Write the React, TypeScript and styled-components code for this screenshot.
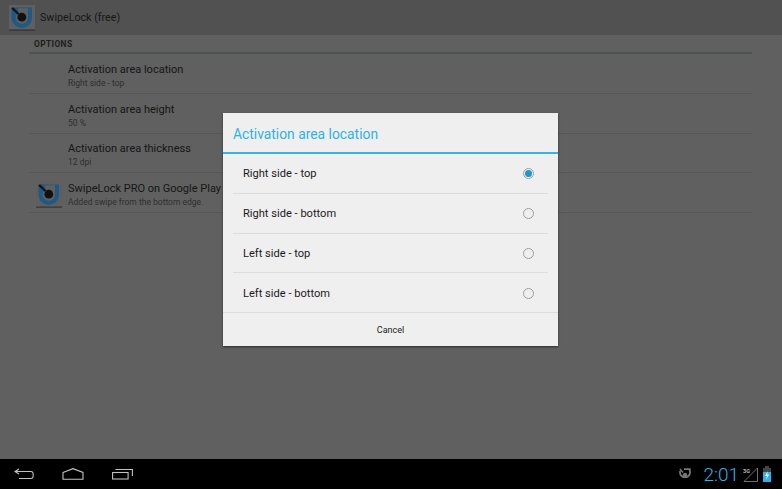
import React from "react";
import styled, { createGlobalStyle } from "styled-components";

const Global = createGlobalStyle`
  html, body { margin: 0; padding: 0; background: #5f605f; }
  #root { width: 782px; height: 489px; overflow: hidden; }
  * { box-sizing: border-box; }
`;

const Screen = styled.div`
  position: relative;
  width: 782px;
  height: 489px;
  display: flex;
  flex-direction: column;
  font-family: Roboto, "Liberation Sans", sans-serif;
  background: #5f605f;
`;

const ActionBar = styled.header`
  height: 35px;
  background: #515151;
  display: flex;
  align-items: center;
  padding-left: 9px;
  gap: 5px;
`;

const AppTitle = styled.div`
  font-size: 10.7px;
  color: #161616;
`;

const Content = styled.main`
  flex: 1;
  padding: 0 30px 0 29px;
`;

const SectionHeader = styled.div`
  height: 19px;
  padding: 4px 0 0 5px;
  font-size: 8.4px;
  font-weight: 700;
  letter-spacing: 0.4px;
  line-height: 10px;
  color: #1e1e1e;
  border-bottom: 2px solid #4d534d;
`;

const PrefRow = styled.div`
  height: 39.8px;
  padding-top: 4px;
  display: flex;
  align-items: center;
  border-bottom: 1px solid #555755;
`;

const PrefIconSlot = styled.div`
  width: 39px;
  padding-left: 7px;
  flex: none;
  display: flex;
  align-items: center;
`;

const PrefText = styled.div`
  display: flex;
  flex-direction: column;
  gap: 1px;
`;

const PrefTitle = styled.div`
  font-size: 11px;
  line-height: 14px;
  color: #161616;
`;

const PrefSummary = styled.div`
  font-size: 8.5px;
  line-height: 10px;
  color: #2f2f2f;
`;

const NavBar = styled.footer`
  height: 30px;
  background: #000;
  display: flex;
  align-items: center;
  justify-content: space-between;
  padding: 0 11px 0 14px;
`;

const NavButtons = styled.div`
  display: flex;
  align-items: center;
  gap: 28px;
`;

const Status = styled.div`
  display: flex;
  align-items: center;
`;

const Clock = styled.div`
  font-size: 19px;
  font-weight: 300;
  color: #2fb2e4;
  margin: 0 4px 0 12px;
`;

const Dialog = styled.section`
  position: absolute;
  left: 223px;
  top: 113px;
  width: 335px;
  height: 233px;
  background: #efefef;
  box-shadow: 0 1px 2px rgba(0, 0, 0, 0.55);
  display: flex;
  flex-direction: column;
`;

const DialogTitle = styled.h2`
  margin: 0;
  height: 41px;
  flex: none;
  padding: 11px 0 0 10px;
  font-size: 13.85px;
  line-height: 20px;
  font-weight: 400;
  color: #2fb2e4;
  border-bottom: 2px solid #38b4e4;
`;

const Options = styled.div`
  margin: 0 10px;
  display: flex;
  flex-direction: column;
`;

const Option = styled.div<{ $last?: boolean }>`
  height: ${(p) => (p.$last ? "39px" : "39.8px")};
  padding: 1px 10px 0;
  display: flex;
  align-items: center;
  justify-content: space-between;
  font-size: 11.1px;
  color: #1a1a1a;
  border-bottom: ${(p) => (p.$last ? "none" : "1px solid #dcdcdc")};
`;

const Radio = styled.span<{ $on?: boolean }>`
  width: 11px;
  height: 11px;
  border-radius: 50%;
  border: 1px solid #9f9f9f;
  display: flex;
  align-items: center;
  justify-content: center;
  flex: none;
  margin-right: 4px;
  &::after {
    content: "";
    width: 7px;
    height: 7px;
    border-radius: 50%;
    background: ${(p) => (p.$on ? "#1f97c9" : "transparent")};
  }
`;

const CancelButton = styled.button`
  flex: 1;
  border: 0;
  border-top: 1px solid #dcdcdc;
  background: none;
  font-family: inherit;
  font-size: 9px;
  font-weight: 400;
  color: #222;
  padding: 0;
`;

const LockIcon = () => (
  <svg width="26" height="26" viewBox="0 0 26 26">
    <rect x="0" y="0" width="26" height="24.6" fill="#5f5f5f" />
    <rect x="0" y="24.6" width="26" height="1" fill="#2b2b2b" />
    <path d="M2.5 2.5 H23 V12.8 A10.25 10.25 0 0 1 2.5 12.8 Z" fill="#1d5a88" />
    <path d="M9 3.2 H19 V12.5 A6.2 6.2 0 0 1 6.6 12.5 A6.2 6.2 0 0 1 9 8 Z" fill="#5f5f5f" />
    <circle cx="12.8" cy="12.2" r="4.4" fill="#111" />
    <path d="M3.2 3 L9.5 9" stroke="#111" strokeWidth="2.4" />
  </svg>
);

const Back = () => (
  <svg width="20" height="12" viewBox="0 0 20 12" fill="none" stroke="#c2c2c2" strokeWidth="1.1">
    <path d="M5 1 L1 3.5 L5 6" />
    <path d="M1 3.5 H17 C20 3.5 20 10.5 17 10.5 H5" />
  </svg>
);

const Home = () => (
  <svg width="22" height="12" viewBox="0 0 22 12" fill="none" stroke="#c2c2c2" strokeWidth="1.1">
    <path d="M1 4.5 L11 0.7 L21 4.5 V11.3 H1 Z" />
  </svg>
);

const Recents = () => (
  <svg width="21" height="12" viewBox="0 0 21 12" fill="none" stroke="#c2c2c2" strokeWidth="1.1">
    <rect x="0.6" y="4.5" width="15.5" height="6.5" />
    <path d="M3.5 1.5 H20.4 V8" />
  </svg>
);

const TrayLock = () => (
  <svg width="12" height="13" viewBox="0 0 12 13">
    <path d="M1.2 3 A5 5 0 1 0 10.8 3 V1.2 H5" fill="none" stroke="#777" strokeWidth="1.8" />
    <circle cx="6" cy="7" r="2.2" fill="#777" />
    <path d="M1 1 L4 4.5" stroke="#777" strokeWidth="1.5" />
  </svg>
);

const Signal = () => (
  <svg width="15" height="15" viewBox="0 0 15 15">
    <path d="M1 14.5 L14.5 1 V14.5 Z" fill="none" stroke="#8c8c8c" strokeWidth="0.8" />
    <text x="0" y="5.5" fontSize="5.5" fontWeight="700" fill="#b5b5b5" fontFamily="Roboto, sans-serif">3G</text>
  </svg>
);

const Battery = () => (
  <svg width="8" height="16" viewBox="0 0 8 16" style={{ marginLeft: 5 }}>
    <rect x="2" y="0" width="4" height="2" fill="#444" />
    <rect x="0" y="2" width="8" height="4" fill="#444" />
    <rect x="0" y="6" width="8" height="10" fill="#2fb2e4" />
    <path d="M5 5 L2 10 H4 L3 14 L6 8.5 H4 Z" fill="#fff" />
  </svg>
);

const prefs = [
  { title: "Activation area location", summary: "Right side - top" },
  { title: "Activation area height", summary: "50 %" },
  { title: "Activation area thickness", summary: "12 dpi" },
];

const options = ["Right side - top", "Right side - bottom", "Left side - top", "Left side - bottom"];

export default function App() {
  return (
    <Screen>
      <Global />
      <ActionBar>
        <LockIcon />
        <AppTitle>SwipeLock (free)</AppTitle>
      </ActionBar>
      <Content>
        <SectionHeader>OPTIONS</SectionHeader>
        {prefs.map((p) => (
          <PrefRow key={p.title}>
            <PrefIconSlot />
            <PrefText>
              <PrefTitle>{p.title}</PrefTitle>
              <PrefSummary>{p.summary}</PrefSummary>
            </PrefText>
          </PrefRow>
        ))}
        <PrefRow>
          <PrefIconSlot>
            <LockIcon />
          </PrefIconSlot>
          <PrefText>
            <PrefTitle>SwipeLock PRO on Google Play</PrefTitle>
            <PrefSummary>Added swipe from the bottom edge.</PrefSummary>
          </PrefText>
        </PrefRow>
      </Content>
      <NavBar>
        <NavButtons>
          <Back />
          <Home />
          <Recents />
        </NavButtons>
        <Status>
          <TrayLock />
          <Clock>2:01</Clock>
          <Signal />
          <Battery />
        </Status>
      </NavBar>
      <Dialog>
        <DialogTitle>Activation area location</DialogTitle>
        <Options>
          {options.map((o, i) => (
            <Option key={o} $last={i === options.length - 1}>
              {o}
              <Radio $on={i === 0} />
            </Option>
          ))}
        </Options>
        <CancelButton>Cancel</CancelButton>
      </Dialog>
    </Screen>
  );
}
